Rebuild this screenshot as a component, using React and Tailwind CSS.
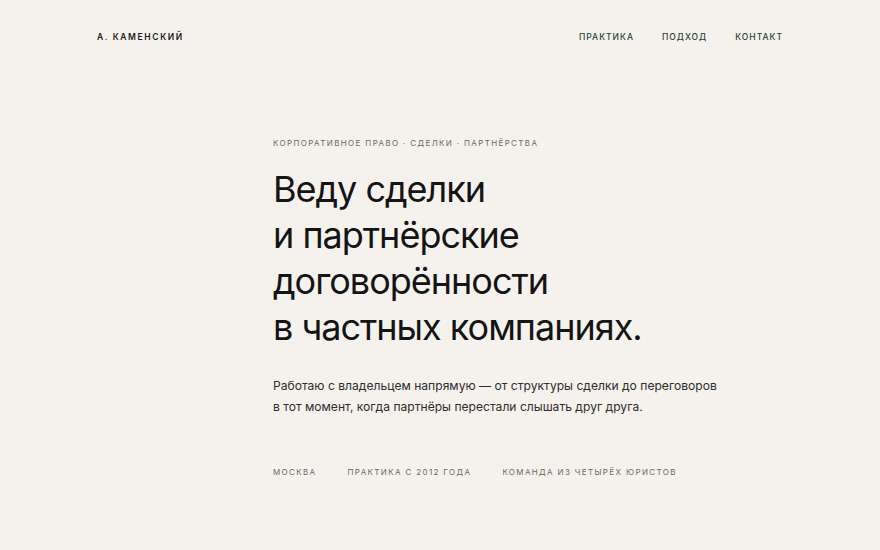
export default function App() {
  return (
    <div
      className="min-h-screen w-full bg-[#f5f2ed] text-[#161616]"
      style={{ fontFamily: "Inter, 'Noto Sans', sans-serif" }}
    >
      {/* Header */}
      <header className="flex items-center justify-between px-[97px] pt-[31px]">
        <div className="text-[8.5px] font-semibold leading-[12px] tracking-[0.19em] text-[#1c1c1c]">
          А. КАМЕНСКИЙ
        </div>
        <nav className="flex gap-[28px] text-[8.5px] font-medium leading-[12px] tracking-[0.12em] text-[#2c3f36]">
          <a href="#">ПРАКТИКА</a>
          <a href="#">ПОДХОД</a>
          <a href="#">КОНТАКТ</a>
        </nav>
      </header>

      {/* Hero */}
      <main className="pl-[273px] pt-[94px]">
        <p className="text-[8px] leading-[12px] tracking-[0.17em] text-[#6b6863]">
          КОРПОРАТИВНОЕ ПРАВО · СДЕЛКИ · ПАРТНЁРСТВА
        </p>
        <h1 className="mt-[17px] text-[36px] font-normal leading-[46px] tracking-[-0.028em] text-[#141414]">
          Веду сделки
          <br />
          и партнёрские
          <br />
          договорённости
          <br />
          в частных компаниях.
        </h1>
        <p className="mt-[25px] text-[12.1px] leading-[21px] text-[#2e2d2b]">
          Работаю с владельцем напрямую — от структуры сделки до переговоров
          <br />
          в тот момент, когда партнёры перестали слышать друг друга.
        </p>
        <div className="mt-[49px] flex gap-[31px] text-[8px] leading-[12px] tracking-[0.17em] text-[#6b6863]">
          <span>МОСКВА</span>
          <span>ПРАКТИКА С 2012 ГОДА</span>
          <span>КОМАНДА ИЗ ЧЕТЫРЁХ ЮРИСТОВ</span>
        </div>
      </main>
    </div>
  );
}
